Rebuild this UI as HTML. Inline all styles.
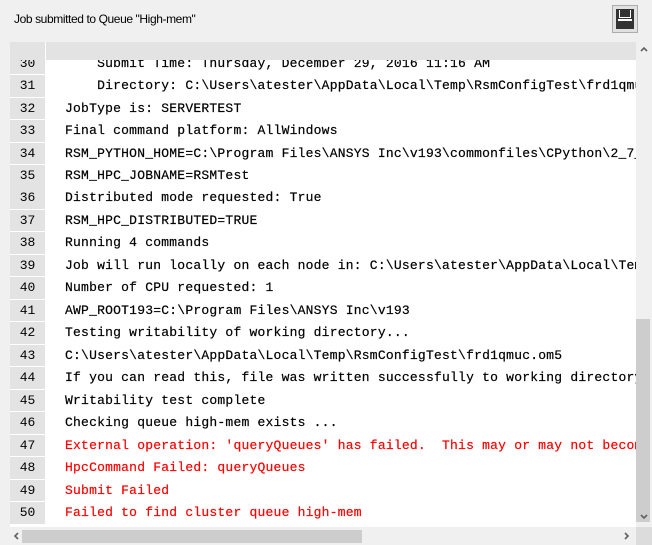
<html><head><style>
body{margin:0;width:652px;height:545px;background:#f0f0f0;position:relative;overflow:hidden;font-family:"Liberation Mono",monospace}
.title{position:absolute;left:14px;top:12px;font:12px "Liberation Sans",sans-serif;color:#000;letter-spacing:-0.4px}
.save{position:absolute;left:612px;top:5px;width:24px;height:26px;border:1px solid #adadad;background:#e1e1e1}
.save i{position:absolute;left:3px;top:3px;width:18px;height:20px;background:#333}
.save b{position:absolute;left:6px;top:4px;width:12px;height:8px;border:1.5px solid #fff;border-top:none;box-sizing:border-box}
.save u{position:absolute;left:5px;top:13px;width:14px;height:1.5px;background:#fff}
.grid{position:absolute;left:10px;top:42px;width:626px;height:485px;background:#fff;overflow:hidden}
.hdr{position:absolute;left:0;top:0;width:626px;height:18px;background:#e3e3e3;z-index:2}
.hdr:before{content:"";position:absolute;left:35px;top:0;width:1px;height:18px;background:#fff}
.row{position:absolute;left:0;width:626px;height:22.47px;font-size:13px;white-space:pre}
.n{position:absolute;left:0;top:0;width:35px;height:21.5px;background:#e3e3e3;text-align:center;line-height:22px;color:#000;z-index:1}
.t{position:absolute;left:55px;top:0;line-height:22px;color:#000;-webkit-text-stroke:0.2px #000;letter-spacing:0.22px}
.r .t{color:#f00;-webkit-text-stroke:0.2px #f00}
.vs{position:absolute;left:636px;top:42px;width:16px;height:485px;background:#f0f0f0}
.vth{position:absolute;left:636px;top:319px;width:14px;height:203px;background:#cdcdcd}
.hs{position:absolute;left:10px;top:527px;width:626px;height:18px;background:#f0f0f0}
.hth{position:absolute;left:22px;top:530px;width:340px;height:13px;background:#cdcdcd}
.corner{position:absolute;left:636px;top:527px;width:16px;height:18px;background:#dcdcdc}
svg{position:absolute}
</style></head><body>
<div class="title">Job submitted to Queue "High-mem"</div>
<div class="save"><i></i><b></b><u></u></div>
<div class="grid">
<div class="hdr"></div>
<div class="row" style="top:10.6px"><div class="n">30</div><div class="t">    Submit Time: Thursday, December 29, 2016 11:16 AM</div></div>
<div class="row" style="top:33px"><div class="n">31</div><div class="t">    Directory: C:\Users\atester\AppData\Local\Temp\RsmConfigTest\frd1qmuc.om5</div></div>
<div class="row" style="top:55.5px"><div class="n">32</div><div class="t">JobType is: SERVERTEST</div></div>
<div class="row" style="top:78px"><div class="n">33</div><div class="t">Final command platform: AllWindows</div></div>
<div class="row" style="top:100.5px"><div class="n">34</div><div class="t">RSM_PYTHON_HOME=C:\Program Files\ANSYS Inc\v193\commonfiles\CPython\2_7_</div></div>
<div class="row" style="top:123px"><div class="n">35</div><div class="t">RSM_HPC_JOBNAME=RSMTest</div></div>
<div class="row" style="top:145.4px"><div class="n">36</div><div class="t">Distributed mode requested: True</div></div>
<div class="row" style="top:167.9px"><div class="n">37</div><div class="t">RSM_HPC_DISTRIBUTED=TRUE</div></div>
<div class="row" style="top:190.4px"><div class="n">38</div><div class="t">Running 4 commands</div></div>
<div class="row" style="top:212.9px"><div class="n">39</div><div class="t">Job will run locally on each node in: C:\Users\atester\AppData\Local\Temp</div></div>
<div class="row" style="top:235.3px"><div class="n">40</div><div class="t">Number of CPU requested: 1</div></div>
<div class="row" style="top:257.8px"><div class="n">41</div><div class="t">AWP_ROOT193=C:\Program Files\ANSYS Inc\v193</div></div>
<div class="row" style="top:280.3px"><div class="n">42</div><div class="t">Testing writability of working directory...</div></div>
<div class="row" style="top:302.8px"><div class="n">43</div><div class="t">C:\Users\atester\AppData\Local\Temp\RsmConfigTest\frd1qmuc.om5</div></div>
<div class="row" style="top:325.2px"><div class="n">44</div><div class="t">If you can read this, file was written successfully to working directory</div></div>
<div class="row" style="top:347.7px"><div class="n">45</div><div class="t">Writability test complete</div></div>
<div class="row" style="top:370.2px"><div class="n">46</div><div class="t">Checking queue high-mem exists ...</div></div>
<div class="row r" style="top:392.7px"><div class="n">47</div><div class="t">External operation: 'queryQueues' has failed.  This may or may not become</div></div>
<div class="row r" style="top:415.1px"><div class="n">48</div><div class="t">HpcCommand Failed: queryQueues</div></div>
<div class="row r" style="top:437.6px"><div class="n">49</div><div class="t">Submit Failed</div></div>
<div class="row r" style="top:460.1px"><div class="n">50</div><div class="t">Failed to find cluster queue high-mem</div></div>
</div>
<div class="vs"></div><div class="vth"></div>
<div class="hs"></div><div class="hth"></div><div class="corner"></div>
<svg style="left:640px;top:46px" width="8" height="6"><path d="M1 5 L4 2 L7 5" stroke="#606060" stroke-width="1.6" fill="none"/></svg>
<svg style="left:640px;top:514px" width="8" height="6"><path d="M1 1 L4 4 L7 1" stroke="#606060" stroke-width="1.6" fill="none"/></svg>
<svg style="left:13px;top:532px" width="6" height="8"><path d="M5 1 L2 4 L5 7" stroke="#606060" stroke-width="1.6" fill="none"/></svg>
<svg style="left:624px;top:532px" width="6" height="8"><path d="M1 1 L4 4 L1 7" stroke="#606060" stroke-width="1.6" fill="none"/></svg>
</body></html>
